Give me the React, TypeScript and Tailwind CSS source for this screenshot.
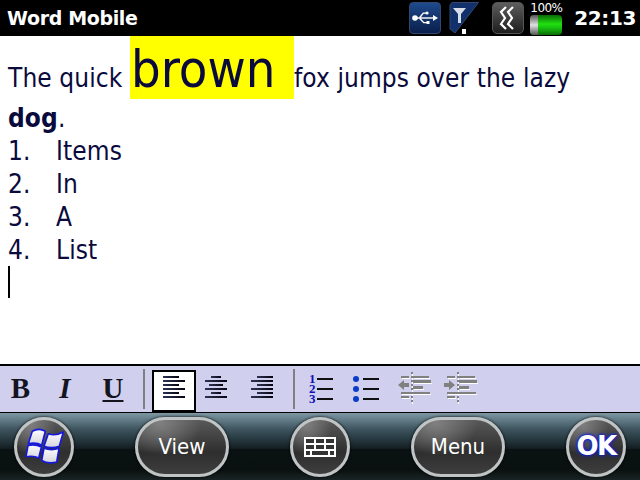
function AlignIcon({ widths, align }: { widths: number[]; align: 'left' | 'center' | 'right' }) {
  return (
    <svg width="24" height="24" viewBox="0 0 24 24">
      <defs>
        <linearGradient id="bar" x1="0" y1="0" x2="1" y2="0">
          <stop offset="0" stopColor="#2c3252" />
          <stop offset="1" stopColor="#050510" />
        </linearGradient>
      </defs>
      {widths.map((w, i) => {
        const x = align === 'left' ? 1 : align === 'center' ? 12 - w / 2 : 23 - w
        return <rect key={i} x={x} y={i * 4} width={w} height="2" fill="url(#bar)" />
      })}
    </svg>
  )
}

function IndentIcon({ flip }: { flip?: boolean }) {
  const dots = [0, 4, 8, 12, 16, 20, 24, 28]
  return (
    <svg width="34" height="34" viewBox="0 0 34 34" shapeRendering="crispEdges">
      {dots.map(y => (
        <g key={y}>
          <rect x="13" y={y} width="2" height="2" fill="#808080" />
          <rect x="14" y={y + 2} width="1" height="2" fill="#ffffff" />
        </g>
      ))}
      <rect x="4" y="6" width="8" height="1" fill="#ffffff" />
      <rect x="3" y="4" width="8" height="2" fill="#808080" />
      <rect x="16" y="6" width="16" height="1" fill="#ffffff" />
      <rect x="15" y="4" width="16" height="2" fill="#808080" />
      <rect x="16" y="11" width="18" height="1" fill="#ffffff" />
      <rect x="15" y="8" width="18" height="3" fill="#808080" />
      <rect x="16" y="17" width="10" height="1" fill="#ffffff" />
      <rect x="15" y="14" width="10" height="3" fill="#808080" />
      <rect x="4" y="22" width="29" height="1" fill="#ffffff" />
      <rect x="3" y="20" width="29" height="2" fill="#808080" />
      <rect x="4" y="26" width="8" height="1" fill="#ffffff" />
      <rect x="3" y="24" width="8" height="2" fill="#808080" />
      {flip ? (
        <path d="M0 11h5V8l6 5-6 5v-3H0z" fill="#808080" shapeRendering="auto" />
      ) : (
        <path d="M0 13l6-5v3h5v4H6v3z" fill="#808080" shapeRendering="auto" />
      )}
    </svg>
  )
}

function WindowsLogo() {
  return (
    <svg width="40" height="37" viewBox="0 0 40 37" className="ml-1 overflow-visible">
      <defs>
        <linearGradient id="flag" x1="0" y1="0" x2="0" y2="1">
          <stop offset="0" stopColor="#ffffff" />
          <stop offset="1" stopColor="#d4d4dc" />
        </linearGradient>
      </defs>
      <g fill="url(#flag)" stroke="#1418e0" strokeWidth="1.6" strokeLinejoin="round">
        <path d="M6.300 3.300C11 .7 15 .7 19.300 3.300L15.700 17.300C12 15 8 14.500 2.300 15.700z" />
        <path d="M22.300 5.700C27 7.500 32 7 37.300 4L33.300 18.300C28 20 23 20 18 18.300z" />
        <path d="M2 17.500C7 16.200 11 16.700 15.400 19L12.700 30C9 28 5 27.800 0 28.700z" />
        <path d="M18 20.300C23 22 28 22 33 20.300L30.700 34C25 35.500 20 35 15.700 32.500z" />
      </g>
    </svg>
  )
}

function SoftKey({ wide, children }: { wide?: boolean; children: React.ReactNode }) {
  return (
    <div
      className={`flex h-[60px] ${wide ? 'w-[94px]' : 'w-[60px]'} items-center justify-center rounded-full border-[3px] border-[#c0c4c4] bg-[radial-gradient(ellipse_at_25%_5%,#808080_0%,transparent_45%),linear-gradient(#585858,#2e2e2e_60%,#3e3e3e)] shadow-[0_0_3px_#000]`}
    >
      {children}
    </div>
  )
}

export default function App() {
  return (
    <div className="flex h-[480px] w-[640px] flex-col overflow-hidden bg-white font-['DejaVu_Sans',sans-serif]">
      {/* Title bar */}
      <div className="flex h-9 items-center bg-black pl-[7px] text-white">
        <span className="text-[19px] font-bold tracking-[-0.35px]">Word Mobile</span>
        <div className="ml-auto flex items-center">
          <div className="flex h-8 w-8 items-center justify-center rounded-[4px] border border-[#33476e] bg-gradient-to-b from-[#1e4a8c] to-[#0a1f4c]">
            <svg width="26" height="16" viewBox="0 0 26 16" fill="#fff">
              <circle cx="3" cy="8" r="2.800" />
              <rect x="3" y="7.300" width="19" height="1.400" />
              <path d="M21 5l5 3-5 3z" />
              <path d="M7 7.300 11 2.500h3v1.200h-2.400L8.500 8zM8.500 8l3.500 4h3v1.200h-3.600L7 8.700z" />
              <circle cx="15" cy="3" r="1.600" />
              <rect x="14.500" y="11" width="3" height="3" />
            </svg>
          </div>
          <div className="ml-[8px] h-8 w-[30px]">
            <svg width="30" height="32" viewBox="0 0 30 32">
              <path d="M3 .5H29.500L6 31 1 27V3z" fill="#12306c" stroke="#33476e" />
              <path d="M4 6h13l-5 6v9h-3v-9z" fill="#d8dce8" />
              <rect x="13" y="27" width="4" height="5" fill="#fff" />
            </svg>
          </div>
          <div className="ml-[13px] flex h-8 w-8 items-center justify-center rounded-[5px] border border-[#555] bg-gradient-to-b from-[#5e5e5e] to-[#1e1e1e]">
            <svg width="20" height="24" viewBox="0 0 20 24" fill="none" stroke="#fff" strokeWidth="2.200">
              <path d="M8 1 3 6l4 6-4 6 5 5" />
              <path d="M15 1l-5 5 4 6-4 6 5 5" />
            </svg>
          </div>
          <div className="ml-[6px] flex w-8 flex-col items-center">
            <span className="text-[12px] leading-[12px] tracking-[-0.6px] text-white">100%</span>
            <div className="mt-px flex h-[20px] w-8 overflow-hidden rounded-[4px] bg-[linear-gradient(#0a6a06,#22e010_45%,#18c010_65%,#0a6a06)]">
              <div className="h-full w-[8px] bg-[linear-gradient(#555,#e0e0e0_50%,#555)]" />
            </div>
          </div>
          <span className="ml-3 mr-[4px] text-[20px] font-bold tracking-[-0.4px]">22:13</span>
        </div>
      </div>

      {/* Document */}
      <div className="flex-1 pl-2 text-[26px] tracking-[0.1px] text-[#0a0a3c] font-['DejaVu_Sans_Condensed','DejaVu_Sans',sans-serif]">
        <div className="flex h-[63px] items-baseline">
          <span className="w-[122px] whitespace-nowrap">The quick</span>
          <span className="h-[63px] w-[164px] bg-[#ffff00] pl-[1px] pt-[2px] text-[52px] leading-[63px] tracking-normal">brown</span>
          <span className="whitespace-nowrap">fox jumps over the lazy</span>
        </div>
        <div className="mt-[3px] leading-[33px]">
          <b>dog</b>.
        </div>
        {['Items', 'In', 'A', 'List'].map((item, i) => (
          <div key={item} className="flex leading-[33px]">
            <span className="w-12">{i + 1}.</span>
            <span>{item}</span>
          </div>
        ))}
        <div className="-mt-px h-[32px] w-[2px] bg-black" />
      </div>

      {/* Format toolbar */}
      <div className="flex h-[49px] items-center border-t-2 border-b border-black bg-[#d0d0ee]">
        <div className="flex w-[41px] justify-center font-['Liberation_Serif',serif] text-[29px] font-bold text-[#14141f]">B</div>
        <div className="flex w-[48px] justify-center font-['Liberation_Serif',serif] text-[29px] font-bold italic text-[#14141f]">I</div>
        <div className="flex w-[48px] justify-center font-['Liberation_Serif',serif] text-[29px] font-bold text-[#14141f] underline">U</div>
        <div className="ml-[6px] h-10 w-[2px] bg-[#808080]" />
        <div className="ml-[7px] flex h-[42px] w-[44px] justify-center self-end border-2 border-black bg-white pt-[4px]">
          <AlignIcon widths={[16, 22, 16, 22, 16, 22]} align="left" />
        </div>
        <div className="mb-[2px] ml-[8px] flex">
          <AlignIcon widths={[10, 22, 14, 22, 10, 22]} align="center" />
        </div>
        <div className="mb-[2px] ml-[22px] flex">
          <AlignIcon widths={[16, 22, 16, 22, 16, 22]} align="right" />
        </div>
        <div className="ml-[19px] h-10 w-[2px] bg-[#808080]" />
        <div className="ml-[14px] flex flex-col">
          {['1', '2', '3'].map(n => (
            <div key={n} className="flex h-[10px] items-center">
              <span className="w-[7px] font-['Liberation_Serif',serif] text-[13px] font-bold leading-[10px] text-[#1010b8]">{n}</span>
              <span className="ml-[1px] h-[2px] w-4 bg-[#111]" />
            </div>
          ))}
        </div>
        <div className="ml-[20px] flex flex-col">
          {[0, 1, 2].map(n => (
            <div key={n} className="flex h-[10px] items-center">
              <span className="h-[6px] w-[6px] rounded-full bg-[#0a3cc8]" />
              <span className="ml-[4px] h-[2px] w-4 bg-[#111]" />
            </div>
          ))}
        </div>
        <div className="ml-[19px] flex"><IndentIcon /></div>
        <div className="ml-[12px] flex"><IndentIcon flip /></div>
      </div>

      {/* Softkey bar */}
      <div className="flex h-[67px] items-center justify-between bg-[linear-gradient(#7d98a4_0%,#3c525c_25%,#1e2e34_45%,#141e22_53%,#0a1212_53%,#0a1010_85%,#1a2424_100%)] px-[14px]">
        <SoftKey><WindowsLogo /></SoftKey>
        <SoftKey wide><span className="font-['DejaVu_Sans_Condensed',sans-serif] text-[22px] text-white">View</span></SoftKey>
        <SoftKey>
          <svg width="32" height="20" viewBox="0 0 32 20" shapeRendering="crispEdges">
            <rect width="32" height="20" fill="#fff" />
            <g fill="#333">
              <rect x="2" y="2" width="8" height="4" />
              <rect x="12" y="2" width="8" height="4" />
              <rect x="22" y="2" width="8" height="4" />
              <rect x="2" y="8" width="8" height="4" />
              <rect x="12" y="8" width="8" height="4" />
              <rect x="22" y="8" width="8" height="4" />
              <rect x="2" y="14" width="4" height="4" />
              <rect x="8" y="14" width="16" height="4" />
              <rect x="26" y="14" width="4" height="4" />
            </g>
          </svg>
        </SoftKey>
        <SoftKey wide><span className="font-['DejaVu_Sans_Condensed',sans-serif] text-[22px] text-white">Menu</span></SoftKey>
        <SoftKey>
          <span className="text-[26px] font-bold tracking-[-1.5px] text-white [text-shadow:0_0_4px_#1420d8,0_0_3px_#1420d8,0_0_2px_#1420d8]">OK</span>
        </SoftKey>
      </div>
    </div>
  )
}
